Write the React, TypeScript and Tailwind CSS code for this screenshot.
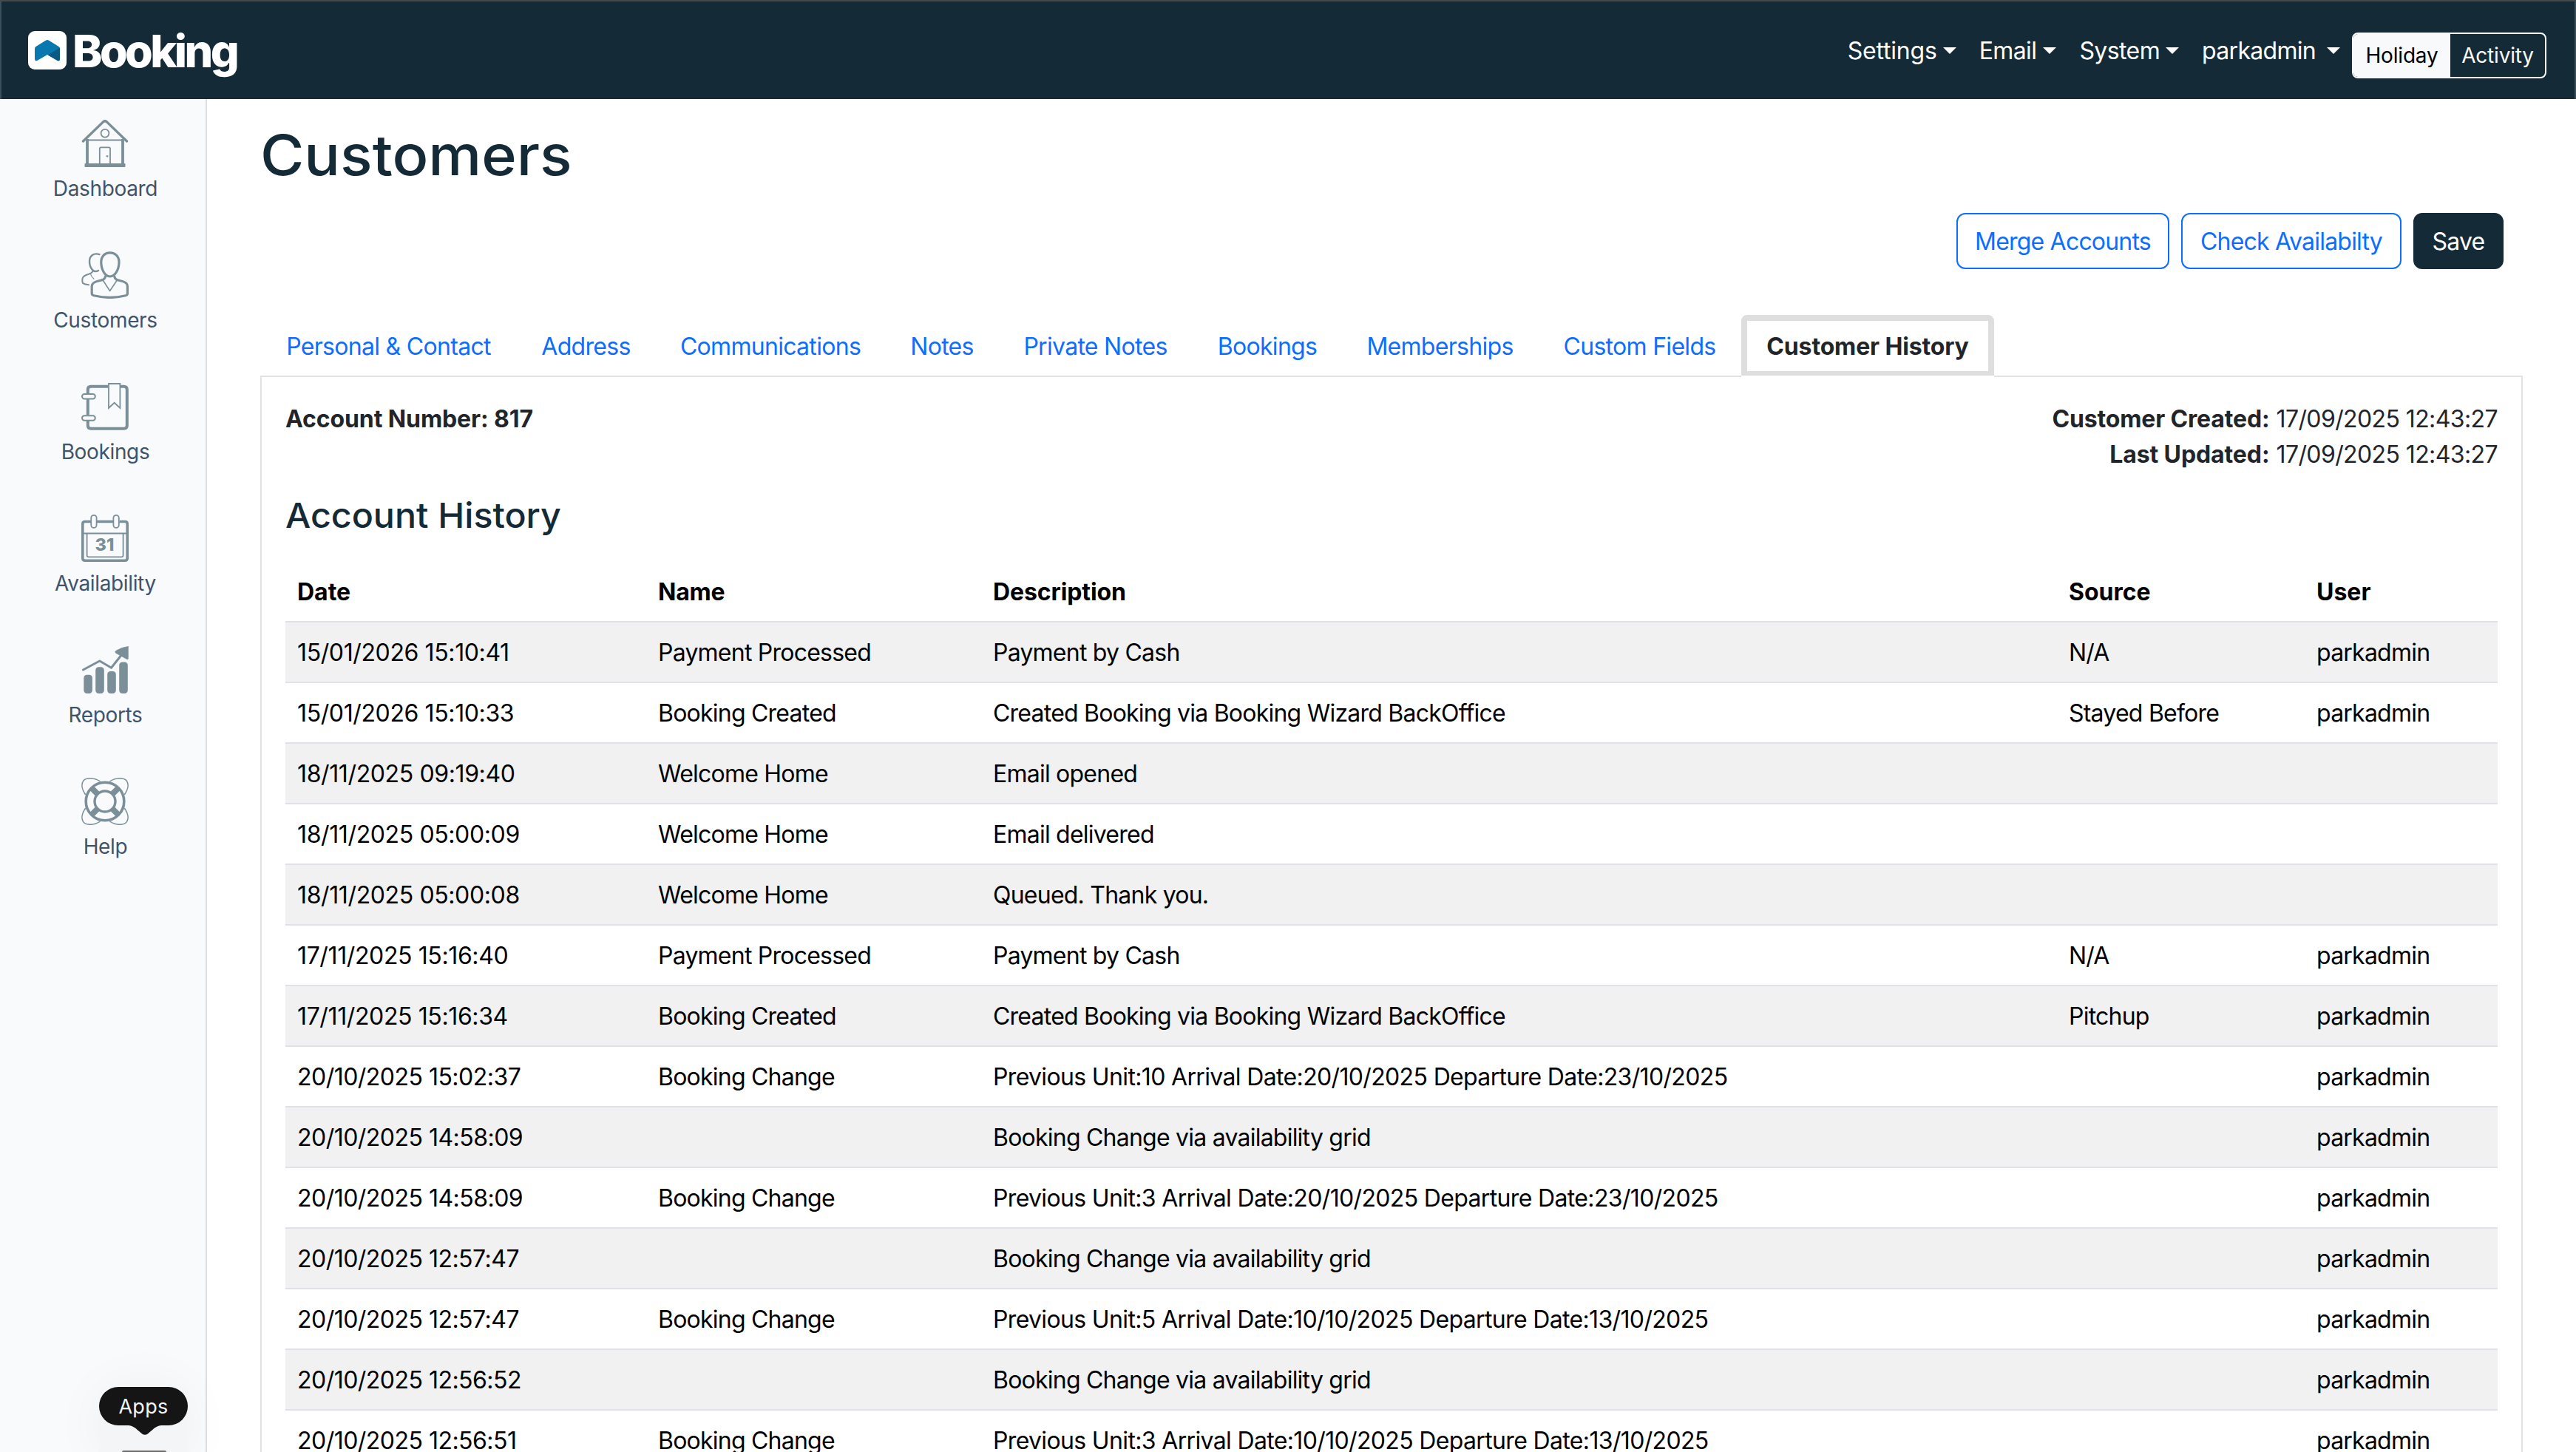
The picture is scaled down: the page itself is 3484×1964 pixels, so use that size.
import { ReactNode } from 'react';

const menus = [
  { label: 'Settings', className: 'mr-[31px] tracking-[-0.2px]', gap: 'ml-[8px]' },
  { label: 'Email', className: 'mr-[31px] tracking-[-0.6px]', gap: 'ml-[9px]' },
  { label: 'System', className: 'mr-[31px] tracking-[-0.6px]', gap: 'ml-[8px]' },
  { label: 'parkadmin', className: 'mr-[16px] tracking-[-0.7px]', gap: 'ml-[15px]' },
];

const tabs = [
  { label: 'Personal & Contact', width: 'w-[347px]' },
  { label: 'Address', width: 'w-[187px]' },
  { label: 'Communications', width: 'w-[312px]' },
  { label: 'Notes', width: 'w-[152px]' },
  { label: 'Private Notes', width: 'w-[263px]' },
  { label: 'Bookings', width: 'w-[202px]' },
  { label: 'Memberships', width: 'w-[265px]' },
  { label: 'Custom Fields', width: 'w-[275px]' },
];

const history = [
  ['15/01/2026 15:10:41', 'Payment Processed', 'Payment by Cash', 'N/A', 'parkadmin'],
  ['15/01/2026 15:10:33', 'Booking Created', 'Created Booking via Booking Wizard BackOffice', 'Stayed Before', 'parkadmin'],
  ['18/11/2025 09:19:40', 'Welcome Home', 'Email opened', '', ''],
  ['18/11/2025 05:00:09', 'Welcome Home', 'Email delivered', '', ''],
  ['18/11/2025 05:00:08', 'Welcome Home', 'Queued. Thank you.', '', ''],
  ['17/11/2025 15:16:40', 'Payment Processed', 'Payment by Cash', 'N/A', 'parkadmin'],
  ['17/11/2025 15:16:34', 'Booking Created', 'Created Booking via Booking Wizard BackOffice', 'Pitchup', 'parkadmin'],
  ['20/10/2025 15:02:37', 'Booking Change', 'Previous Unit:10 Arrival Date:20/10/2025 Departure Date:23/10/2025', '', 'parkadmin'],
  ['20/10/2025 14:58:09', '', 'Booking Change via availability grid', '', 'parkadmin'],
  ['20/10/2025 14:58:09', 'Booking Change', 'Previous Unit:3 Arrival Date:20/10/2025 Departure Date:23/10/2025', '', 'parkadmin'],
  ['20/10/2025 12:57:47', '', 'Booking Change via availability grid', '', 'parkadmin'],
  ['20/10/2025 12:57:47', 'Booking Change', 'Previous Unit:5 Arrival Date:10/10/2025 Departure Date:13/10/2025', '', 'parkadmin'],
  ['20/10/2025 12:56:52', '', 'Booking Change via availability grid', '', 'parkadmin'],
  ['20/10/2025 12:56:51', 'Booking Change', 'Previous Unit:3 Arrival Date:10/10/2025 Departure Date:13/10/2025', '', 'parkadmin'],
];

function cellTracking(cell: string, column: number) {
  if (column === 0) return cell.startsWith('20/') ? 'tracking-[-0.52px]' : 'tracking-[-0.38px]';
  if (cell.startsWith('Previous')) return 'tracking-[-0.65px]';
  return 'tracking-[-0.77px]';
}

function Icon({ children }: { children: ReactNode }) {
  return (
    <svg viewBox="0 0 64 64" className="w-16 h-16 text-[#7b8f98]" fill="none" stroke="currentColor" strokeLinejoin="round" strokeLinecap="round">
      {children}
    </svg>
  );
}

function HouseIcon() {
  return (
    <Icon>
      <path d="M2.5 29 L29.8 2.6 Q32 0.8 34.2 2.6 L61.5 29" strokeWidth="3.4" />
      <path d="M9 27.5 H55" strokeWidth="2" />
      <path d="M8 26 V59 M56 26 V59" strokeWidth="3.8" strokeLinecap="butt" />
      <rect x="4.5" y="59" width="55" height="5" rx="1" fill="currentColor" stroke="none" />
      <circle cx="32" cy="18.2" r="5.4" strokeWidth="1.8" />
      <path d="M24.8 59 V39 Q24.8 37.4 26.4 37.4 H37.4 Q39 37.4 39 39 V59" strokeWidth="1.8" />
      <circle cx="35" cy="49.3" r="1.3" fill="currentColor" stroke="none" />
    </Icon>
  );
}

function PeopleIcon() {
  return (
    <Icon>
      <path d="M24.5 4.2 C17 1.5 11 6 11 13.5 C11 18 12.5 22.5 15.5 25.5 C17.5 27.2 20.5 27.4 23 26" strokeWidth="2.4" />
      <path d="M15.5 26.5 C15 29 13 29.8 10 30.8 C6 32 2.6 33.5 1.8 36 C1 39 1.2 41.5 2.2 43.2 C4 44.4 7 45 10 45.3" strokeWidth="2" />
      <path d="M12.5 30.5 C13 33 15 35.5 17 37.2" strokeWidth="1.2" />
      <path d="M38.7 1.8 C46 1.8 51 7 51 14.5 C51 24 46 34 38.7 34 C31.5 34 26.8 24 26.8 14.5 C26.8 7 31.5 1.8 38.7 1.8 Z" strokeWidth="3.2" />
      <path d="M32.5 34 C32 38 29 38.6 24 39.8 C18.5 41 14.2 43.5 14.2 47 V57 C14.2 58.5 15 59.2 17 59.8 C31 63.2 46.5 63.2 60 59.8 C61.8 59.2 62.4 58.5 62.4 57 V47 C62.4 43.5 58.5 41 53 39.8 C48.5 38.6 45.2 38 44.8 34" strokeWidth="3.2" />
      <path d="M29.5 39.5 L38.6 53.5 L48 39.5" strokeWidth="1.6" />
    </Icon>
  );
}

function NotebookIcon() {
  return (
    <Icon>
      <path d="M36.5 4.8 H13 Q8.8 4.8 8.8 9 V15 M8.8 22 V43.5 M8.8 50.5 V57.5 Q8.8 61.7 13 61.7 H57.5 Q61.8 61.7 61.8 57.5 V9 Q61.8 4.8 57.5 4.8 H53" strokeWidth="4" strokeLinecap="butt" />
      <rect x="1" y="15" width="17.8" height="6.4" rx="3.2" strokeWidth="2" />
      <rect x="1" y="44.3" width="17.8" height="6.4" rx="3.2" strokeWidth="2" />
      <path d="M37 1 H52.4 V34 L44.7 26.8 L37 34 Z" strokeWidth="1.8" strokeLinejoin="miter" />
    </Icon>
  );
}

function CalendarIcon() {
  return (
    <Icon>
      <path d="M13 9.5 H5 Q1.8 9.5 1.8 12.7 V59 Q1.8 62.2 5 62.2 H59 Q62.2 62.2 62.2 59 V12.7 Q62.2 9.5 59 9.5 H51.5 M21 9.5 H43" strokeWidth="3.6" strokeLinecap="butt" />
      <rect x="13.2" y="0.9" width="7.4" height="17" rx="3.7" strokeWidth="1.8" />
      <rect x="43.4" y="0.9" width="7.4" height="17" rx="3.7" strokeWidth="1.8" />
      <path d="M2 25.5 H62" strokeWidth="1.8" />
      <path d="M7.6 26 V55 Q7.6 57.4 10 57.4 H54.2 Q56.6 57.4 56.6 55 V26" strokeWidth="1.8" />
      <text x="31.5" y="49.3" textAnchor="middle" fontFamily="Inter, sans-serif" fontSize="23.5" fontWeight="800" fill="currentColor" stroke="none">31</text>
    </Icon>
  );
}

function ChartIcon() {
  return (
    <Icon>
      <path d="M2.5 32 L24.8 20 L40.5 29.3 L55 11" strokeWidth="3" />
      <path d="M63.4 0.4 V16.5 Q63.2 18.4 61.5 17.6 L46.5 9.3 Q44.8 7.8 46.8 6.3 Q54 1.6 63.4 0.4 Z" fill="currentColor" strokeWidth="0.6" />
      <g fill="currentColor" stroke="none">
        <rect x="3.3" y="38.8" width="11.6" height="25.2" rx="4.2" />
        <rect x="19.2" y="28.2" width="11.6" height="35.8" rx="4.2" />
        <rect x="35.2" y="34" width="11.6" height="30" rx="4.2" />
        <rect x="51.2" y="21.6" width="11.6" height="42.4" rx="4.2" />
      </g>
    </Icon>
  );
}

function LifebuoyIcon() {
  return (
    <Icon>
      <path d="M25 4.6 C17 -0.6 6 -0.4 2.6 4.4 C-0.8 9.5 1.6 17 5.4 22.5" strokeWidth="1.6" />
      <path d="M39 4.6 C47 -0.6 58 -0.4 61.4 4.4 C64.8 9.5 62.4 17 58.6 22.5" strokeWidth="1.6" />
      <path d="M25 59.4 C17 64.6 6 64.4 2.6 59.6 C-0.8 54.5 1.6 47 5.4 41.5" strokeWidth="1.6" />
      <path d="M39 59.4 C47 64.6 58 64.4 61.4 59.6 C64.8 54.5 62.4 47 58.6 41.5" strokeWidth="1.6" />
      <circle cx="32" cy="32" r="25.8" strokeWidth="3.6" />
      <circle cx="32" cy="32" r="14" strokeWidth="3.4" />
      <path d="M22 22 L14.5 14.5 M42 22 L49.5 14.5 M22 42 L14.5 49.5 M42 42 L49.5 49.5" strokeWidth="8" strokeLinecap="butt" />
    </Icon>
  );
}

const sidebar = [
  { label: 'Dashboard', icon: <HouseIcon /> },
  { label: 'Customers', icon: <PeopleIcon /> },
  { label: 'Bookings', icon: <NotebookIcon /> },
  { label: 'Availability', icon: <CalendarIcon /> },
  { label: 'Reports', icon: <ChartIcon /> },
  { label: 'Help', icon: <LifebuoyIcon /> },
];

function Navbar() {
  return (
    <header className="h-[134px] shrink-0 bg-[#142a36] border-t-[2px] border-t-[#484848] border-x-[2px] border-x-[#3b4f5a] flex items-start justify-between pl-[36px] pr-[38px]">
      <div className="flex items-start pt-[40px]">
        <svg viewBox="0 0 52 52" className="w-[52px] h-[52px]">
          <rect width="52" height="52" rx="9" fill="#ffffff" />
          <path d="M24.2 12.6 Q26 11.6 27.8 12.6 L41.5 21 Q43 22 43 24 V37.5 Q43 41.5 39.3 39.8 L26 32 L12.7 39.8 Q9 41.5 9 37.5 V24 Q9 22 10.5 21 Z" fill="#0878ae" />
          <path d="M27 32.5 L43 22.5 V37.5 Q43 41.5 39.3 39.8 Z" fill="#0b5a83" />
        </svg>
        <span className="ml-[8px] -mt-[3px] text-[61px] leading-[60px] font-extrabold tracking-[-3.6px] text-white">Booking</span>
      </div>
      <nav className="flex items-start pt-[42px] text-[32px] leading-[48px] text-white">
        {menus.map((m) => (
          <div key={m.label} className={`flex items-center ${m.className}`}>
            <span className="pt-[1px] -mb-[1px]">{m.label}</span>
            <span className={`${m.gap} border-x-[9px] border-t-[9px] border-x-transparent border-t-white`} />
          </div>
        ))}
        <div className="flex h-[62px] w-[263px] border-2 border-[#f8f9fa] rounded-[8px] overflow-hidden text-[28px] leading-[58px] tracking-[-0.2px] text-center">
          <span className="w-[131px] bg-[#f8f9fa] text-black">Holiday</span>
          <span className="flex-1 text-[#f8f9fa]">Activity</span>
        </div>
      </nav>
    </header>
  );
}

function Sidebar() {
  return (
    <aside className="relative w-[280px] shrink-0 bg-[#f8fafc] border-r-[2px] border-[#dcdfe2] pl-[6px]">
      {sidebar.map((item) => (
        <div key={item.label} className="h-[178px] pt-[28px] flex flex-col items-center">
          {item.icon}
          <span className="mt-[8px] ml-[1px] text-[28px] leading-[42px] tracking-[-0.35px] text-[#3f546b]">{item.label}</span>
        </div>
      ))}
      {/* dock tooltip */}
      <div className="absolute left-[134px] bottom-0 w-[120px] h-[88px] rounded-t-[40px] bg-[#f3f5f7] shadow-[0_0_70px_rgba(0,0,0,0.05)]">
        <svg viewBox="0 0 120 65" className="absolute left-0 top-0 w-[120px] h-[65px]">
          <path d="M26 0 H94 A26 26 0 0 1 94 52 H84 C76 52.5 72 59 65 64 Q62 65.5 59 64 C52 59 48 52.5 40 52 H26 A26 26 0 0 1 26 0 Z" fill="#151515" />
        </svg>
        <div className="relative h-[52px] text-center text-[27px] leading-[53px] tracking-[0.3px] text-[#f4f4f4]">Apps</div>
        <div className="absolute bottom-0 left-[31px] w-[60px] h-[2px] rounded-t-[2px] bg-[#6c6c6c]" />
      </div>
    </aside>
  );
}

export default function App() {
  return (
    <div className="w-[3484px] h-[1964px] overflow-hidden bg-white flex flex-col font-['Inter','Liberation_Sans',sans-serif]">
      <Navbar />
      <div className="flex flex-1 min-h-0">
        <Sidebar />
        <main className="flex-1 min-w-0 overflow-hidden px-[72px] pt-[29px]">
          <h1 className="origin-left scale-x-[1.065] text-[76px] leading-[92px] font-medium text-[#142a36]">Customers</h1>

          <div className="mt-[33px] mr-[26px] flex justify-end gap-[16px] h-[76px] text-[32px] leading-[74px] text-center tracking-[-0.8px]">
            <button className="w-[288px] border-2 border-[#0d6efd] rounded-[12px] text-[#0d6efd]">Merge Accounts</button>
            <button className="w-[298px] border-2 border-[#0d6efd] rounded-[12px] text-[#0d6efd]">Check Availabilty</button>
            <button className="w-[122px] border-2 border-[#142a36] rounded-[12px] bg-[#142a36] text-white">Save</button>
          </div>

          <div className="mt-[62px] flex h-[82px] text-[32px] leading-[48px]">
            {tabs.map((tab) => (
              <a key={tab.label} className={`${tab.width} pt-[19px] text-center whitespace-nowrap tracking-[-0.7px] text-[#0d6efd]`}>
                {tab.label}
              </a>
            ))}
            <div className="relative w-[342px] h-[84px] bg-white">
              <div className="h-[82px] border-[8px] border-b-[6px] border-[#dedede] rounded-t-[8px] pt-[11px] text-center font-bold tracking-[-0.15px] text-[#212529]">
                Customer History
              </div>
            </div>
          </div>

          <section className="border-2 border-b-0 border-[#e0e2e3] px-[32px] pt-[33px]">
            <div className="flex justify-between text-[32px] leading-[48px] text-[#212529]">
              <strong className="tracking-[-0.1px]">Account Number: 817</strong>
              <div className="text-right">
                <p><strong className="tracking-[-0.15px]">Customer Created:</strong> <span className="tracking-[-0.6px]">17/09/2025 12:43:27</span></p>
                <p><strong className="tracking-[-0.1px]">Last Updated:</strong> <span className="tracking-[-0.6px]">17/09/2025 12:43:27</span></p>
              </div>
            </div>

            <h2 className="mt-[30px] origin-left scale-x-[1.028] text-[47px] leading-[56px] font-medium text-[#142a36]">Account History</h2>

            <table className="mt-[35px] w-[2992px] table-fixed border-collapse text-left text-[32px] leading-[48px] text-black">
              <thead>
                <tr className="h-[82px] shadow-[inset_0_-2px_0_#dee2e6]">
                  <th className="w-[488px] px-[16px] font-bold">Date</th>
                  <th className="w-[453px] px-[16px] font-bold tracking-[-0.2px]">Name</th>
                  <th className="w-[1455px] px-[16px] font-bold tracking-[-0.1px]">Description</th>
                  <th className="w-[335px] px-[16px] font-bold">Source</th>
                  <th className="px-[16px] font-bold">User</th>
                </tr>
              </thead>
              <tbody>
                {history.map((row, i) => (
                  <tr key={i} className="h-[82px] shadow-[inset_0_-2px_0_#dee2e6] odd:bg-[#f1f1f1]">
                    {row.map((cell, j) => (
                      <td key={j} className={`px-[16px] ${cellTracking(cell, j)}`}>
                        {cell}
                      </td>
                    ))}
                  </tr>
                ))}
              </tbody>
            </table>
          </section>
        </main>
      </div>
    </div>
  );
}
